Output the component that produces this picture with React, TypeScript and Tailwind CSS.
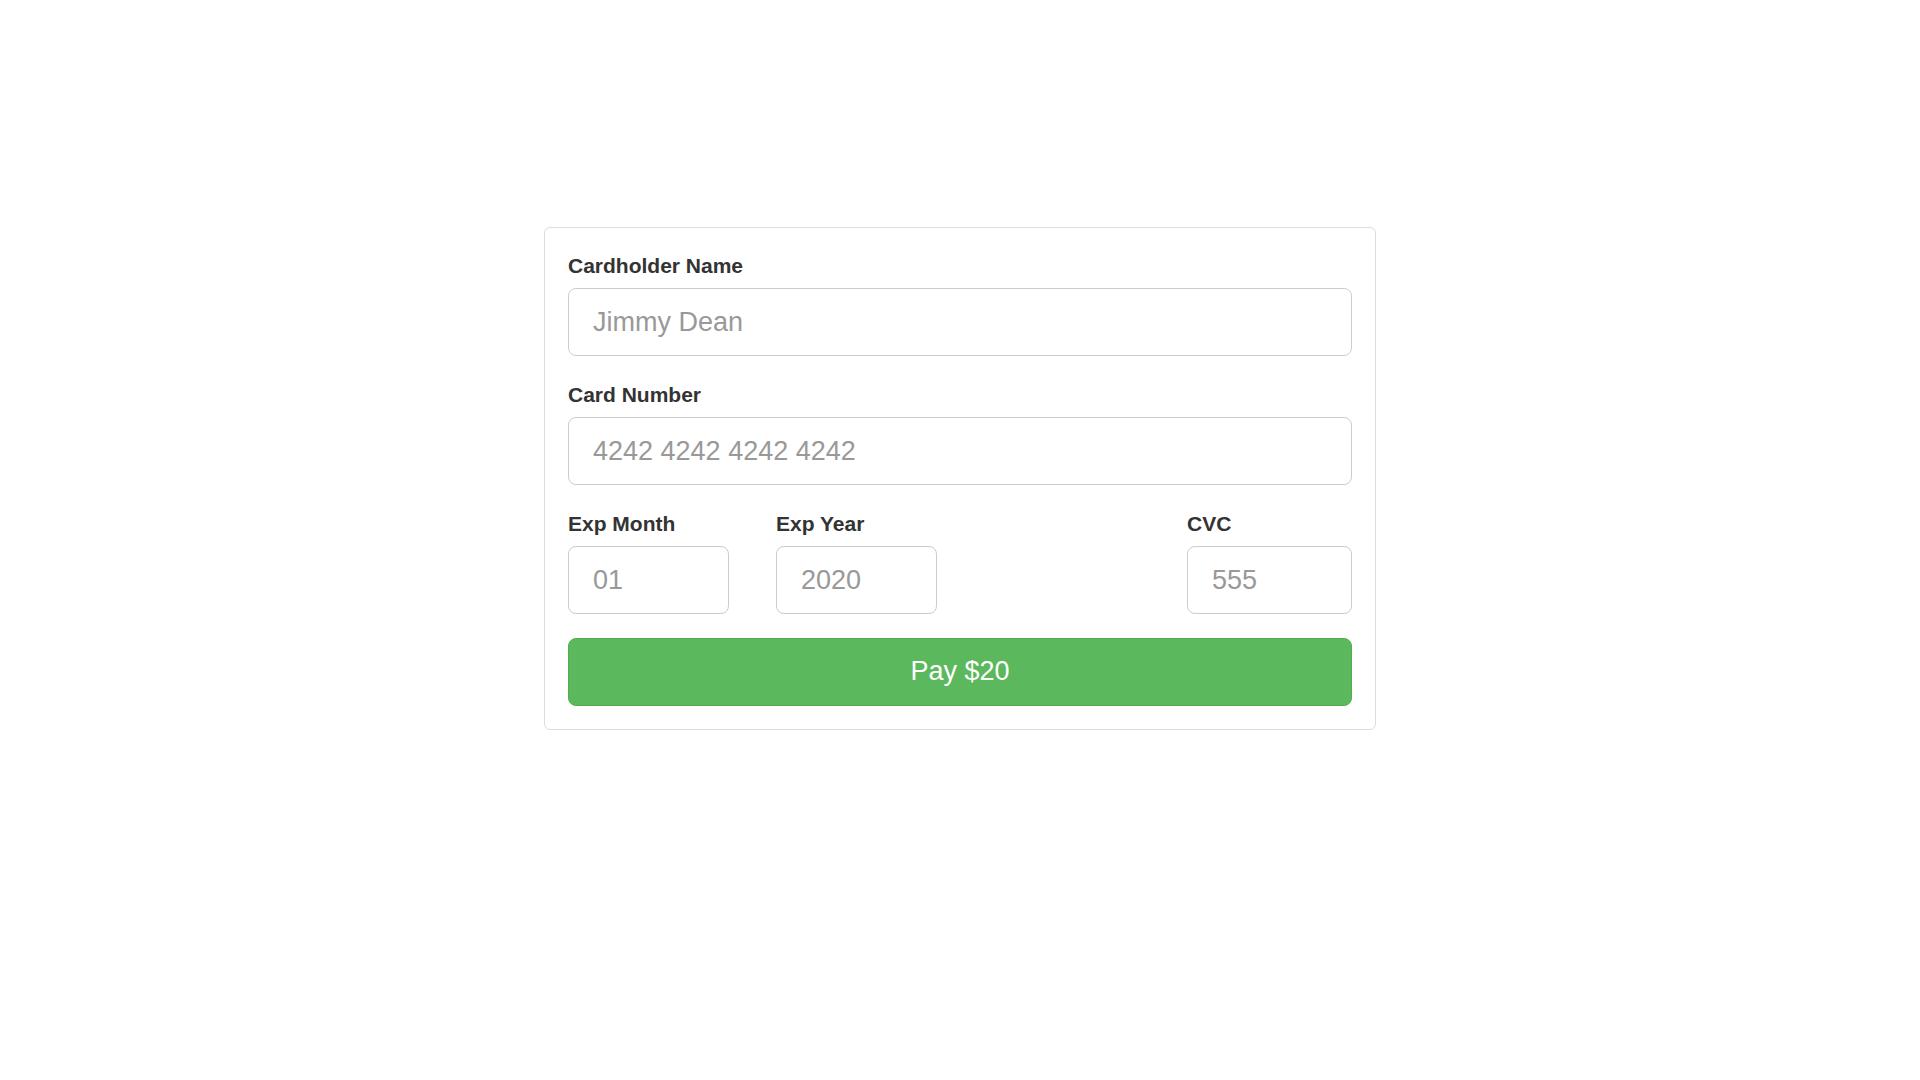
import React from 'react';

const inputClass =
  "block h-[68px] w-full rounded-[8px] border border-[#cccccc] bg-white px-[24px] text-[27px] text-[#555555] placeholder:text-[#999999] outline-none font-['Liberation_Sans',Arial,sans-serif]";

const labelClass = 'mb-[7px] block text-[21px] font-bold leading-[30px] text-[#333333]';

const App: React.FC = () => {
  return (
    <div className="min-h-screen bg-white pt-[227px] font-['Liberation_Sans',Arial,sans-serif]">
      <div className="mx-auto w-[832px] rounded-[6px] border border-[#dddddd] bg-white p-[23px]">
        {/* Name */}
        <div className="mb-[24px]">
          <label className={labelClass}>Cardholder Name</label>
          <input type="text" placeholder="Jimmy Dean" className={inputClass} />
        </div>

        {/* Number */}
        <div className="mb-[24px]">
          <label className={labelClass}>Card Number</label>
          <input type="text" placeholder="4242 4242 4242 4242" className={inputClass} />
        </div>

        {/* Expiry + CVC */}
        <div className="mb-[24px] flex">
          <div className="w-[161px]">
            <label className={labelClass}>Exp Month</label>
            <input type="text" placeholder="01" className={inputClass} />
          </div>
          <div className="ml-[47px] w-[161px]">
            <label className={labelClass}>Exp Year</label>
            <input type="text" placeholder="2020" className={inputClass} />
          </div>
          <div className="ml-auto w-[165px]">
            <label className={labelClass}>CVC</label>
            <input type="text" placeholder="555" className={inputClass} />
          </div>
        </div>

        <button
          type="button"
          className="block h-[68px] w-full rounded-[8px] border border-[#4cae4c] bg-[#5cb85c] pb-[2px] text-[27px] text-white font-['Liberation_Sans',Arial,sans-serif]"
        >
          Pay $20
        </button>
      </div>
    </div>
  );
};

export default App;
